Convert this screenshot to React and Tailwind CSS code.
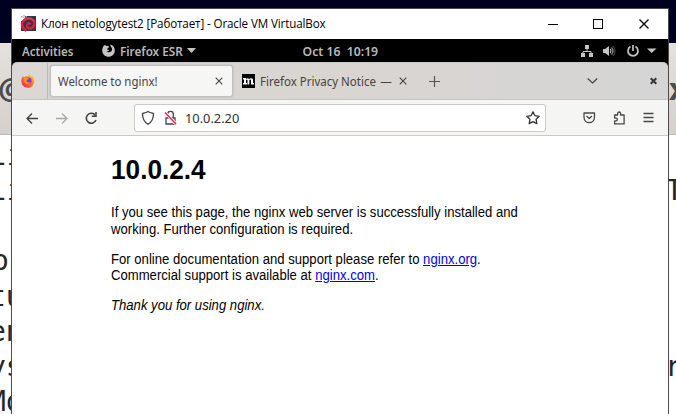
import React from 'react';

const ui = "font-['Noto_Sans','Open_Sans',sans-serif]";

function Backdrop() {
  return (
    <div className="flex h-full flex-col bg-white text-[#262626] font-['DejaVu_Sans_Mono',monospace]">
      <div className="h-[43px] shrink-0 bg-[#000020]" />
      <div className="flex h-[92px] shrink-0 items-center justify-between overflow-hidden border-b border-[#bcb8b4] bg-linear-to-b from-[#e4e1de] to-[#d5d0cc] font-['Noto_Sans',sans-serif] text-[31px] text-[#4a4d4e]">
        <span className="-ml-[2px] font-semibold">@</span>
        <span className="w-[7px] font-bold">x</span>
      </div>
      <div className="flex shrink-0 justify-between">
        <div className="-ml-[10px] flex flex-col pt-[3px] text-[28px] leading-[35.2px]">
          <span>li</span>
          <span>li</span>
          <span className="ml-[2px] pt-[35px]">o</span>
          <span className="ml-[-1px]">tu</span>
          <span className="ml-[-1px]">en</span>
          <span className="ml-[-1px]">ys</span>
          <span className="ml-[-1px]">Mo</span>
        </div>
        <div className="flex w-[9px] flex-col overflow-hidden pt-[38px] text-[28px] leading-[35.3px]">
          <span className="-ml-px">T</span>
          <span className="-ml-[2px] pt-[141px]">r</span>
        </div>
      </div>
    </div>
  );
}

function VmIcon() {
  return (
    <svg className="h-[17px] w-[17px]" viewBox="0 0 17 17" fill="none">
      <path d="M1 6h4V1h11v15H1z" fill="#263b48" />
      <path d="M1 1h1.500v1.500H1zM3.500 0h1v3h-1zM5.500 1H7v2H5.500z" fill="#a5a5a5" />
      <path d="M6.500 15.500C1 13 .8 7.500 5 4.500 9 2 15 4 14.500 9c-.5 4.500-7 6-7.500 2-.3-2.500 2.500-3.500 3.500-1.500" stroke="#e5183f" strokeWidth="2.600" />
      <path d="M5 5.500c3-3 7-2.500 8.500.5" stroke="#fa5269" strokeWidth=".8" />
    </svg>
  );
}

function TitleBar() {
  return (
    <div className="flex h-[30px] shrink-0 items-center bg-white text-black">
      <div className="ml-[8px] mt-[-2px]"><VmIcon /></div>
      <span className="ml-[4px] mt-[-1px] origin-left scale-x-[0.968] whitespace-nowrap text-[12px] font-['Open_Sans','Noto_Sans',sans-serif] tracking-[-0.13px]">
        Клон netologytest2 [Работает] - Oracle VM VirtualBox
      </span>
      <svg className="ml-auto mr-[18px] h-[12px] w-[102px]" viewBox="0 0 102 12" fill="none" stroke="#000" shapeRendering="crispEdges">
        <path d="M0 6.500h10M45.500 1.500h9v9h-9z" />
        <path d="M91.500 1.500l9 9m0-9l-9 9" shapeRendering="auto" strokeWidth="1.200" />
      </svg>
    </div>
  );
}

function GnomeBar() {
  return (
    <div className={`grid h-[23px] shrink-0 grid-cols-3 items-center bg-black text-[13px] leading-[18px] font-semibold text-[#b8b8b8] ${ui}`}>
      <div className="flex items-center whitespace-nowrap">
        <span className="ml-[10px] w-[80px] origin-left scale-x-[0.885]">Activities</span>
        <svg className="h-[13px] w-[13px] shrink-0" viewBox="0 0 13 13">
          <path d="M1.500 2L3 .7l1 1.400C5.500 1.400 6 1.700 7 2.500L6.400 4c-1 .2-1.300.8-1.200 1.500l2 .5c-.7 1.500-2 1.200-2.500 1 .8 1.700 3.800 1.700 5-.2.8-1.400.3-3-1-4.300L8.200.5c2.700.7 4.600 3 4.600 5.900 0 3.500-2.800 6.300-6.300 6.300S.2 9.900.2 6.400C.2 4.700.8 3.500 1.500 2z" fill="#c4c4c4" />
        </svg>
        <span className="ml-[5px] w-[62px] origin-left scale-x-[0.9]">Firefox ESR</span>
        <svg className="ml-[5px] h-[5px] w-[9px] shrink-0" viewBox="0 0 9 5"><path d="M0 0h9L4.500 5z" fill="#c4c4c4" /></svg>
      </div>
      <span className="scale-x-[0.94] whitespace-pre text-center">Oct 16  10:19</span>
      <svg className="ml-auto mr-[11px] h-[14px] w-[77px]" viewBox="0 0 77 14" fill="#c4c4c4">
        <path d="M5 1h4v4H5zM1 9h4v4H1zM9 9h4v4H9z" />
        <path d="M7 5v2.500M3 9V7.500h8V9" fill="none" stroke="#c4c4c4" />
        <path d="M23 5h2l4-3v10l-4-3h-2z" />
        <path d="M30.200 5q1.500 2 0 4" fill="none" stroke="#c4c4c4" strokeWidth="1.200" />
        <path d="M31.500 3.500q3 3.500 0 7" fill="none" stroke="#999" strokeWidth="1.200" />
        <path d="M33 2q4 5 0 10" fill="none" stroke="#555" />
        <path d="M50.500 2.600a5 5 0 1 0 5 0M53 1v6" fill="none" stroke="#c4c4c4" strokeWidth="1.700" />
        <path d="M67 4.500h9.500L71.700 9z" />
      </svg>
    </div>
  );
}

function Close({ className }) {
  return (
    <svg className={className} viewBox="0 0 8 8" fill="none" stroke="currentColor">
      <path d="M.7.700l6.600 6.600M7.300.700L.7 7.300" strokeWidth="1.100" />
    </svg>
  );
}

function Tabs() {
  return (
    <div className="h-[38px] shrink-0 bg-black">
      <div className={`flex h-[38px] items-center rounded-t-[5px] border-b border-t border-b-[#c7c3bf] border-t-[#c9c9c9] bg-linear-to-r from-[#dad7d4] via-[#d9d5d1] to-[#d5d5d5] text-[13px] leading-[18px] text-[#444] ${ui}`}>
        <div className="flex h-full w-[36px] items-center justify-center border-r border-[#bbb8b5]">
          <svg className="-ml-[3px] h-[14px] w-[14px]" viewBox="0 0 14 14">
            <defs>
              <linearGradient id="fire" x1="1" y1="0" x2=".2" y2="1">
                <stop stopColor="#ffd832" />
                <stop offset=".45" stopColor="#ff8a16" />
                <stop offset="1" stopColor="#f52060" />
              </linearGradient>
            </defs>
            <path d="M1 4l1-2 1 1.400L5 2l2 .6L8.500 0c.3 1.500 1.300 2 2 3l.8-.8c2 2.500 2.500 5 1.300 7.500A6.300 6.300 0 0 1 1.400 11C.2 9-.2 6.500 1 4z" fill="url(#fire)" />
            <circle cx="7.300" cy="6.700" r="3.300" fill="#7446ca" />
            <path d="M3 4.500c1.200-1 2.500-1 3.500-.5l1.700.7-1.600 1.100c-.8.2-1 .8-.8 1.400.4 1.400 2 1.700 3.800.8-1 3-5.600 2.700-6.500-.2z" fill="#ff8b21" />
          </svg>
        </div>
        <div className="ml-[2px] flex h-[32px] w-[183px] items-center rounded-[3px] border border-[#c2bfbc] bg-[#f6f6f5] shadow-[0_0_2px_#aaa]">
          <span className="ml-[7px] origin-left scale-x-[0.88] whitespace-nowrap">Welcome to nginx!</span>
          <Close className="ml-auto mr-[9px] h-[8px] w-[8px]" />
        </div>
        <svg className="ml-[9px] h-[14px] w-[13px] shrink-0" viewBox="0 0 13 14" fill="#fff">
          <path d="M0 0h13v14H0z" fill="#050505" />
          <path d="M1 4h3v1q1.500-1.500 3 0 3-1.800 4 .5V9h1v1.500H9V6Q8 4.800 7.300 6v4.500H5.500V6Q4.700 4.800 4 6v3h1v1.500H1V9h1V5.500H1z" />
        </svg>
        <div className="ml-[5px] w-[132px] overflow-hidden whitespace-nowrap"><span className="inline-block origin-left scale-x-[0.885]">Firefox Privacy Notice<span className="ml-[5px]">—</span></span></div>
        <Close className="ml-[7px] h-[8px] w-[8px]" />
        <svg className="ml-[22px] h-[11px] w-[11px]" viewBox="0 0 11 11"><path d="M5.500 0v11M0 5.500h11" stroke="#555" strokeWidth="1.200" /></svg>
        <svg className="ml-auto mr-[52px] h-[6px] w-[11px]" viewBox="0 0 11 6"><path d="M.7.500L5.500 5 10.300.500" fill="none" stroke="#444" strokeWidth="1.200" /></svg>
        <svg className="mr-[11px] h-[8px] w-[7px]" viewBox="0 0 7 8"><path d="M.7 1.200l5.600 5.600M6.300 1.200L.7 6.800" stroke="#303638" strokeWidth="2" /></svg>
      </div>
    </div>
  );
}

function Toolbar() {
  return (
    <div className={`flex h-[36px] shrink-0 items-center border-b border-[#cbcac8] bg-[#f5f5f4] text-[13px] leading-[18px] text-[#303030] ${ui}`}>
      <svg className="ml-[14px] h-[14px] w-[73px]" viewBox="0 0 73 14" fill="none" stroke="#404040" strokeWidth="1.300">
        <path d="M12 7.500H1m5-5l-5 5 5 5" />
        <path d="M30 7.500h11m-5-5l5 5-5 5" stroke="#aaa" />
        <path d="M69.300 4.200A5 5 0 1 0 70 9" strokeWidth="1.500" />
        <path d="M70 1v4.200h-4.200" strokeWidth="1.500" />
      </svg>
      <div className="ml-[35px] flex h-[28px] w-[412px] items-center rounded-[3px] border border-[#cbc8c5] bg-white">
        <svg className="ml-[6px] h-[16px] w-[37px]" viewBox="0 0 37 16" fill="none" stroke="#444" strokeWidth="1.300">
          <path d="M7 1.500c2 1.500 3.500 1.500 5.500 2C12.500 9 11 12 7 14.300 3 12 1.500 9 1.500 3.500 3.500 3 5 3 7 1.500z" />
          <path d="M25 8h9v6h-9zM26.700 8V4.200a2.800 2.800 0 0 1 5.600 0V8" />
          <path d="M24 2.500l11 11.500" stroke="#f6f6f6" strokeWidth="3.200" />
          <path d="M24 2.500l11 11.500" stroke="#ed2556" strokeWidth="1.500" />
        </svg>
        <span className="ml-[7px] origin-left scale-x-[0.985]">10.0.2.20</span>
        <svg className="ml-auto mr-[5px] h-[14px] w-[14px]" viewBox="0 0 14 14" fill="none" stroke="#333" strokeWidth="1.300" strokeLinejoin="round"><path d="M7 .8l1.900 3.900 4.300.6-3.100 3 .7 4.300L7 10.600l-3.800 2 .7-4.300-3.100-3 4.300-.6z" /></svg>
      </div>
      <svg className="ml-auto mr-[14px] h-[16px] w-[71px]" viewBox="0 0 71 16" fill="none" stroke="#484848" strokeWidth="1.300">
        <path d="M1 3h10.500v4c0 7.500-10.500 7.500-10.500 0zM3.500 6l2.700 2.500L9 6" strokeLinejoin="round" />
        <path d="M31.600 13.900v-3h1.500c1.700 0 1.700-2.800 0-2.800h-1.500V5h3V3.500c0-2 3-2 3 0V5h3.500v8.900z" strokeLinejoin="round" />
        <path d="M60.500 3.500h10M60.500 7.500h10M60.500 11.500h10" />
      </svg>
    </div>
  );
}

function Page() {
  return (
    <main className="flex-1 bg-white pl-[99px] pt-[18px] text-black font-['Liberation_Sans',Arial,sans-serif]">
      <h1 className="origin-left scale-x-[0.97] text-[27px] font-bold leading-[32px]">10.0.2.4</h1>
      <div className="mt-[18px] origin-left scale-x-[0.937] whitespace-nowrap text-[14px] leading-[16.500px]">
        <p>If you see this page, the nginx web server is successfully installed and<br />working. Further configuration is required.</p>
        <p className="mt-[13.500px]">For online documentation and support please refer to <a className="text-[#0000ee] underline">nginx.org</a>.<br />Commercial support is available at <a className="text-[#0000ee] underline">nginx.com</a>.</p>
        <p className="mt-[13.500px] italic">Thank you for using nginx.</p>
      </div>
    </main>
  );
}

export default function App() {
  return (
    <div className="relative h-[414px] w-[676px] overflow-hidden">
      <Backdrop />
      <div className="absolute left-[11px] top-[8px] flex h-[420px] w-[658px] flex-col border border-[#4b4b4d]">
        <TitleBar />
        <GnomeBar />
        <Tabs />
        <Toolbar />
        <Page />
      </div>
    </div>
  );
}
